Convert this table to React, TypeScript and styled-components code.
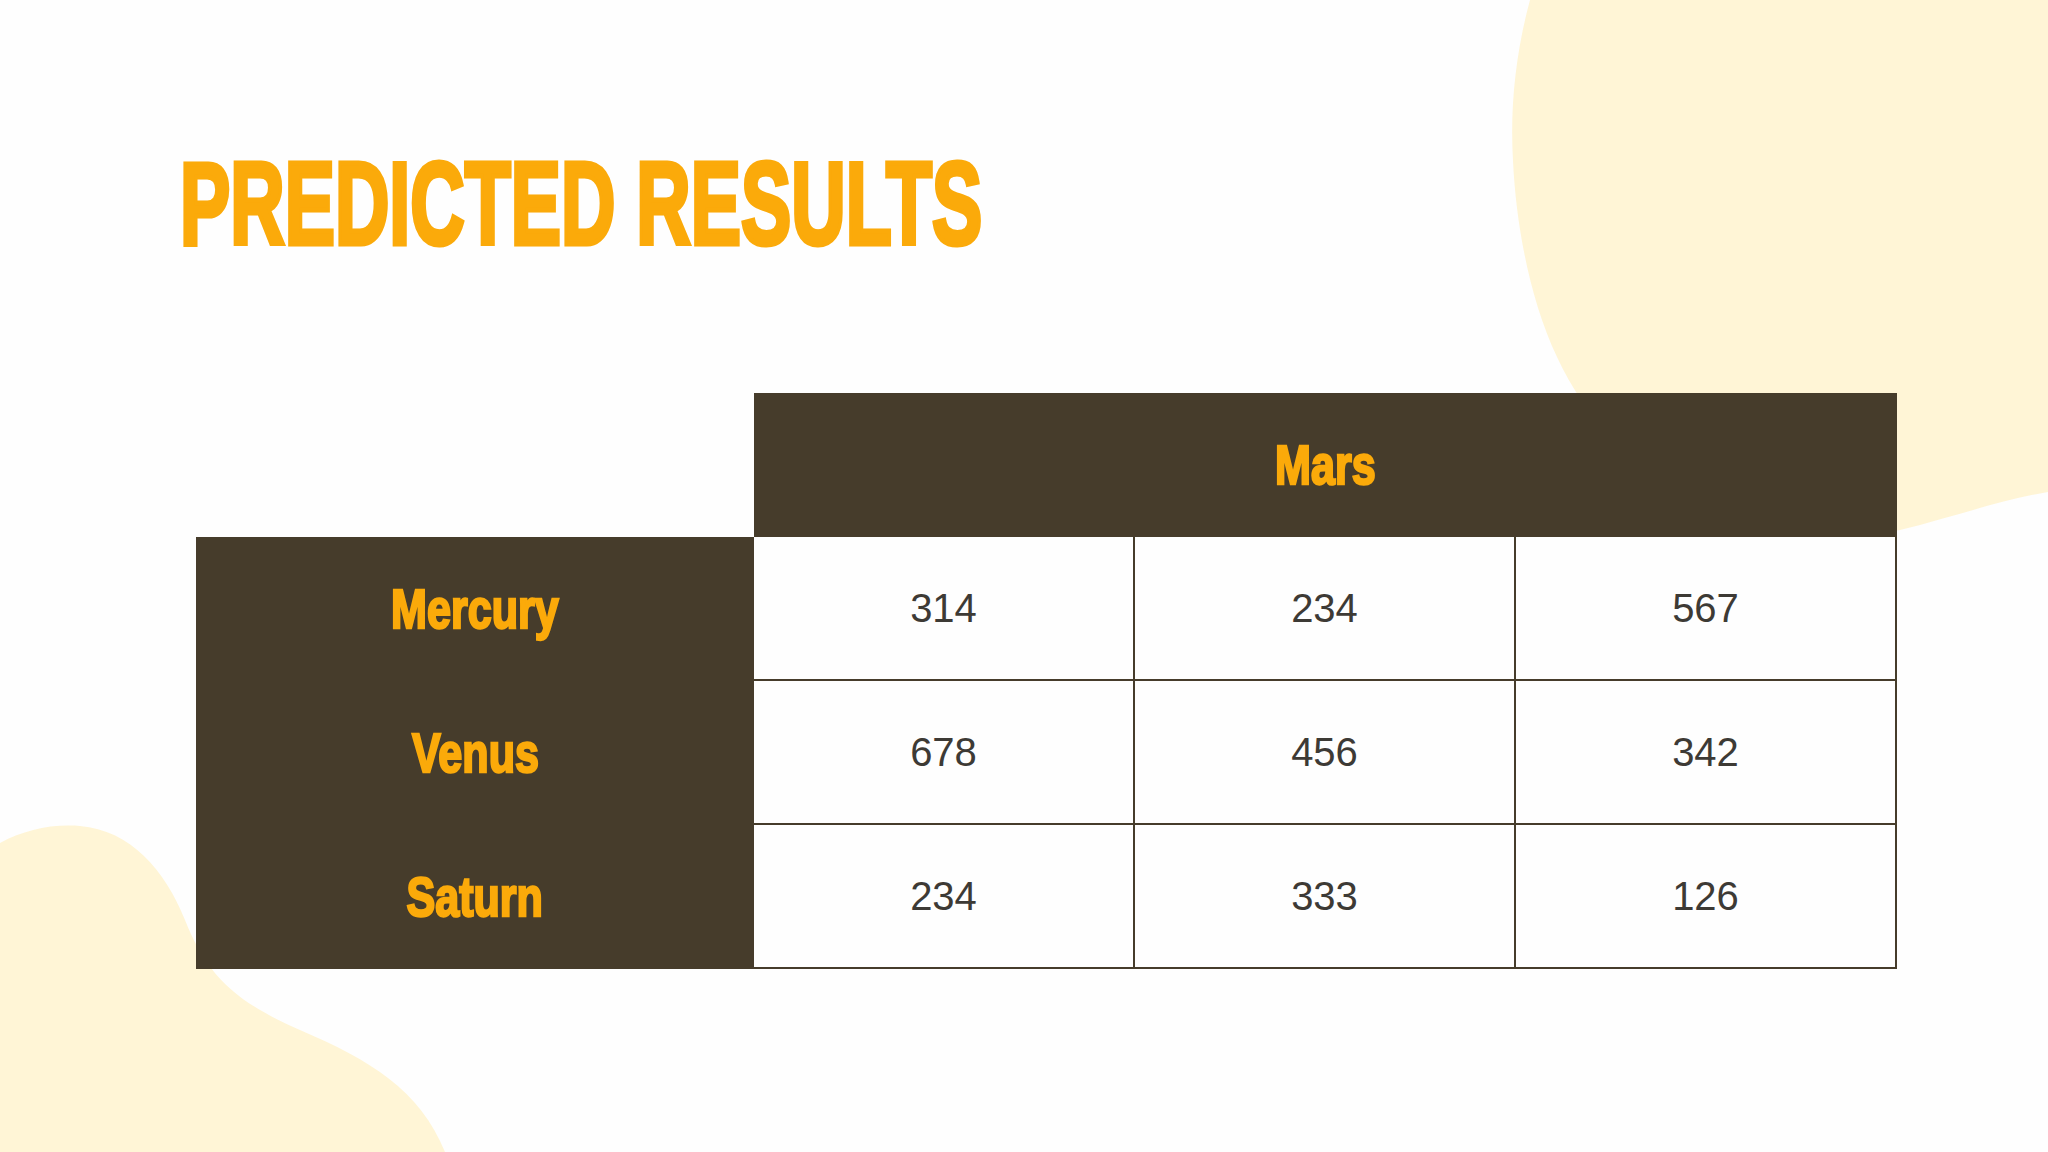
import styled, { createGlobalStyle } from "styled-components";

const GlobalStyle = createGlobalStyle`
  html, body {
    margin: 0;
    padding: 0;
    background: #fefefe;
  }
`;

const DARK = "#463c2b";
const ORANGE = "#fbaa0a";
const CREAM = "#fff5d6";

const Slide = styled.div`
  position: relative;
  width: 2048px;
  height: 1152px;
  overflow: hidden;
  background: #fefefe;
  font-family: "Liberation Sans", Arial, sans-serif;
`;

const Backdrop = styled.svg`
  position: absolute;
  inset: 0;
  width: 100%;
  height: 100%;
  z-index: 0;
`;

const Content = styled.div`
  position: relative;
  z-index: 1;
  display: flex;
  flex-direction: column;
  padding-top: 145px;
`;

const TitleRow = styled.div`
  padding-left: 180px;
  height: 117px;
`;

const Title = styled.h1`
  display: inline-block;
  margin: 0;
  font-size: 117px;
  line-height: 1;
  font-weight: 700;
  color: ${ORANGE};
  -webkit-text-stroke: 5px ${ORANGE};
  white-space: nowrap;
  transform: scaleX(0.644);
  transform-origin: left center;
`;

const Table = styled.div`
  margin-top: 131px;
  margin-left: 196px;
  display: grid;
  grid-template-columns: 558px repeat(3, 381px);
  grid-template-rows: repeat(4, 144px);
`;

const Corner = styled.div``;

const HeadCell = styled.div`
  grid-column: 2 / span 3;
  background: ${DARK};
  display: flex;
  align-items: center;
  justify-content: center;
`;

const LabelCell = styled.div`
  background: ${DARK};
  display: flex;
  align-items: center;
  justify-content: center;
`;

const Label = styled.span`
  display: inline-block;
  font-size: 56px;
  line-height: 1;
  font-weight: 700;
  color: ${ORANGE};
  -webkit-text-stroke: 2.5px ${ORANGE};
  transform: scaleX(0.77);
  transform-origin: center;
  white-space: nowrap;
`;

const DataCell = styled.div`
  background: #fefefe;
  border-right: 2px solid ${DARK};
  border-bottom: 2px solid ${DARK};
  display: flex;
  align-items: center;
  justify-content: center;
  font-size: 40px;
  color: #3d3a35;
`;

const rows = [
  { name: "Mercury", values: [314, 234, 567] },
  { name: "Venus", values: [678, 456, 342] },
  { name: "Saturn", values: [234, 333, 126] },
];

export default function App() {
  return (
    <>
      <GlobalStyle />
      <Slide>
        <Backdrop viewBox="0 0 2048 1152" preserveAspectRatio="none">
          <path
            fill={CREAM}
            d="M1530,0 C1515,55 1510,110 1513,161 C1516,225 1530,300 1557,357 C1600,450 1700,540 1812,539 C1850,538 1880,534 1900,530 C1950,518 2000,500 2048,492 L2048,0 Z"
          />
          <path
            fill={CREAM}
            d="M0,843 C25,830 50,824 80,826 C130,830 165,870 185,920 C205,970 230,1000 300,1030 C370,1060 420,1090 445,1152 L0,1152 Z"
          />
        </Backdrop>
        <Content>
          <TitleRow>
            <Title>PREDICTED RESULTS</Title>
          </TitleRow>
          <Table>
            <Corner />
            <HeadCell>
              <Label>Mars</Label>
            </HeadCell>
            {rows.map((row) => (
              <>
                <LabelCell key={row.name}>
                  <Label>{row.name}</Label>
                </LabelCell>
                {row.values.map((v, i) => (
                  <DataCell key={row.name + i}>{v}</DataCell>
                ))}
              </>
            ))}
          </Table>
        </Content>
      </Slide>
    </>
  );
}
